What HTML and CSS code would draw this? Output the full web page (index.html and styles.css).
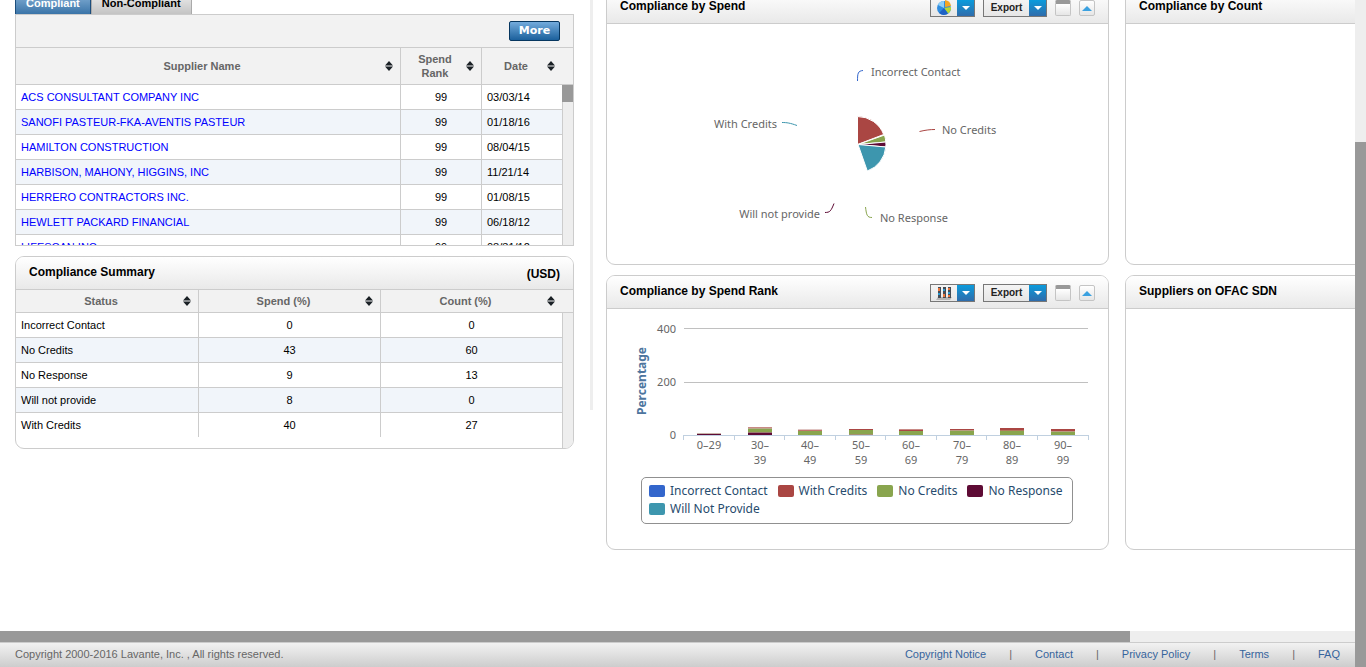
FILE: index.html
```html
<!DOCTYPE html>
<html lang="en">
<head>
<meta charset="utf-8">
<title>Compliance Dashboard</title>
<link rel="stylesheet" href="styles.css">
</head>
<body>
<svg width="0" height="0" class="defs" aria-hidden="true">
  <symbol id="sort" viewBox="0 0 8 10"><path d="M4 0 8 4.500H0ZM0 5.500H8L4 10Z" fill="#1b2126"/></symbol>
  <symbol id="caret" viewBox="0 0 8 4"><path d="M0 0H8L4 4Z" fill="#fff"/></symbol>
  <symbol id="up" viewBox="0 0 10 5"><path d="M5 0 10 5H0Z" fill="#3ba1e0"/></symbol>
</svg>
<div class="app">
  <div class="frame">
    <main class="viewport">
      <div class="board">
        <div class="side">
          <div class="tabs">
            <button class="tab active">Compliant</button><button class="tab">Non-Compliant</button>
          </div>
          <section class="panel suppliers">
            <div class="toolbar"><button class="more">More</button></div>
            <div class="grid clip">
              <table>
                <colgroup><col><col class="c-rank"><col class="c-date"></colgroup>
                <thead class="tall"><tr>
                  <th><button class="sorter"><span>Supplier Name</span><svg class="sort"><use href="#sort"/></svg></button></th>
                  <th><button class="sorter"><span>Spend Rank</span><svg class="sort"><use href="#sort"/></svg></button></th>
                  <th><button class="sorter"><span>Date</span><svg class="sort"><use href="#sort"/></svg></button></th>
                </tr></thead>
                <tbody>
                  <tr><td><a href="#">ACS CONSULTANT COMPANY INC</a></td><td class="num">99</td><td>03/03/14</td></tr>
                  <tr><td><a href="#">SANOFI PASTEUR-FKA-AVENTIS PASTEUR</a></td><td class="num">99</td><td>01/18/16</td></tr>
                  <tr><td><a href="#">HAMILTON CONSTRUCTION</a></td><td class="num">99</td><td>08/04/15</td></tr>
                  <tr><td><a href="#">HARBISON, MAHONY, HIGGINS, INC</a></td><td class="num">99</td><td>11/21/14</td></tr>
                  <tr><td><a href="#">HERRERO CONTRACTORS INC.</a></td><td class="num">99</td><td>01/08/15</td></tr>
                  <tr><td><a href="#">HEWLETT PACKARD FINANCIAL</a></td><td class="num">99</td><td>06/18/12</td></tr>
                  <tr><td><a href="#">LIFESCAN INC</a></td><td class="num">99</td><td>08/31/12</td></tr>
                </tbody>
              </table>
              <div class="rail"><div class="rail-head tall"></div><div class="rail-track"><div class="rail-thumb"></div></div></div>
            </div>
          </section>
          <section class="panel rounded summary">
            <header class="card-head"><h2>Compliance Summary</h2><strong>(USD)</strong></header>
            <div class="grid">
              <table>
                <colgroup><col class="c-status"><col><col class="c-count"></colgroup>
                <thead><tr>
                  <th><button class="sorter"><span>Status</span><svg class="sort"><use href="#sort"/></svg></button></th>
                  <th><button class="sorter"><span>Spend (%)</span><svg class="sort"><use href="#sort"/></svg></button></th>
                  <th><button class="sorter"><span>Count (%)</span><svg class="sort"><use href="#sort"/></svg></button></th>
                </tr></thead>
                <tbody>
                  <tr><td>Incorrect Contact</td><td class="num">0</td><td class="num">0</td></tr>
                  <tr><td>No Credits</td><td class="num">43</td><td class="num">60</td></tr>
                  <tr><td>No Response</td><td class="num">9</td><td class="num">13</td></tr>
                  <tr><td>Will not provide</td><td class="num">8</td><td class="num">0</td></tr>
                  <tr><td>With Credits</td><td class="num">40</td><td class="num">27</td></tr>
                </tbody>
              </table>
              <div class="rail"><div class="rail-head"></div><div class="rail-track"></div></div>
            </div>
          </section>
        </div>
        <div class="splitter"></div>
        <div class="cards">
          <section class="panel rounded card">
            <header class="card-head"><h2>Compliance by Spend</h2>
              <div class="tools">
                <button class="drop" aria-label="Chart type"><span class="face"><svg width="16" height="16" viewBox="0 0 16 16"><circle cx="8" cy="8" r="7" fill="#2f8de0"/><path d="M2 5A7 7 0 0 1 8 1V8Z" fill="#8fd0f7"/><path d="M9 7V0A7 7 0 0 1 15 6Z" fill="#f5a623"/><path d="M8 8 15 7A7 7 0 0 1 12 13.500Z" fill="#b9d832"/><path d="M8 8 12 13.500A7 7 0 0 1 3 13Z" fill="#1f62c4"/></svg></span><span class="arrow"><svg width="8" height="4"><use href="#caret"/></svg></span></button>
                <button class="drop export"><span class="face">Export</span><span class="arrow"><svg width="8" height="4"><use href="#caret"/></svg></span></button>
                <button class="mini window" aria-label="Maximize"></button>
                <button class="mini" aria-label="Collapse"><svg width="10" height="5"><use href="#up"/></svg></button>
              </div>
            </header>
            <svg class="chart" viewBox="607 24 501 240" role="img" aria-label="Compliance by Spend pie chart">
              <g stroke="#fff" stroke-width="1">
                <path d="M857.500 144.500V116.500A28 28 0 0 1 883.700 134.500Z" fill="#aa4643"/>
                <path d="M858 144.500 884.500 135A28 28 0 0 1 885.800 142Z" fill="#89a54e"/>
                <path d="M858 144.500 885.800 142A28 28 0 0 1 885.800 147Z" fill="#5e0b35"/>
                <path d="M858 144.500 885.800 147A28 28 0 0 1 867.300 171Z" fill="#3d96ae"/>
              </g>
              <g fill="none" stroke-width="1">
                <path d="M863 70.500C858 71 857.500 73 857.500 81" stroke="#36c"/>
                <path d="M935 129.500C930 129.500 926 130 919.500 131.500" stroke="#aa4643"/>
                <path d="M872 217.500C867 217.500 866.500 215 865.500 207" stroke="#89a54e"/>
                <path d="M825 212.500C830 212.500 831 211 834 203.500" stroke="#5e0b35"/>
                <path d="M782 122.500C787 122.500 790 123 797 125.500" stroke="#3d96ae"/>
              </g>
              <g class="label">
                <text x="871" y="76">Incorrect Contact</text>
                <text x="942" y="134">No Credits</text>
                <text x="880" y="222">No Response</text>
                <text x="820" y="218" text-anchor="end">Will not provide</text>
                <text x="777" y="128" text-anchor="end">With Credits</text>
              </g>
            </svg>
          </section>
          <section class="panel rounded card"><header class="card-head"><h2>Compliance by Count</h2></header></section>
          <section class="panel rounded card">
            <header class="card-head"><h2>Compliance by Spend Rank</h2>
              <div class="tools">
                <button class="drop" aria-label="Chart type"><span class="face"><svg width="16" height="14" viewBox="0 0 16 14"><path d="M2 11H16L14 14H0Z" fill="#b4b4b4"/><path d="M2 1H5V12H2ZM7 1H10V12H7ZM12 1H15V12H12Z" fill="#444b55"/><path d="M2 2H4V5H2ZM7 8H9V11H7ZM12 2H14V4H12ZM12 9H14V11H12Z" fill="#e8743b"/><path d="M2 7H4V9H2ZM7 3H9V5H7ZM12 6H14V8H12Z" fill="#2b9ad0"/></svg></span><span class="arrow"><svg width="8" height="4"><use href="#caret"/></svg></span></button>
                <button class="drop export"><span class="face">Export</span><span class="arrow"><svg width="8" height="4"><use href="#caret"/></svg></span></button>
                <button class="mini window" aria-label="Maximize"></button>
                <button class="mini" aria-label="Collapse"><svg width="10" height="5"><use href="#up"/></svg></button>
              </div>
            </header>
            <svg class="chart" viewBox="607 309 501 168" role="img" aria-label="Compliance by Spend Rank bar chart">
              <path d="M684 328.500H1088M684 382.500H1088" stroke="#c0c0c0"/>
              <g shape-rendering="crispEdges">
                <path d="M697 433h24v1h-24z" fill="#c9b3a8"/><path d="M697 434h24v1h-24z" fill="#5e0b35"/>
                <path d="M748 427h24v1h-24z" fill="#c98a86"/><path d="M748 428h24v1h-24z" fill="#b9a98a"/><path d="M748 429h24v3h-24z" fill="#89a54e"/><path d="M748 432h24v1h-24z" fill="#9a7a70"/><path d="M748 433h24v2h-24z" fill="#5e0b35"/>
                <path d="M798 429h24v1h-24z" fill="#e0c4c2"/><path d="M798 430h24v1h-24z" fill="#c0736b"/><path d="M798 431h24v4h-24z" fill="#89a54e"/>
                <path d="M849 429h24v1h-24z" fill="#aa4643"/><path d="M849 430h24v4h-24z" fill="#89a54e"/><path d="M849 434h24v1h-24z" fill="#a58f70"/>
                <path d="M899 429h24v1h-24z" fill="#c98a86"/><path d="M899 430h24v1h-24z" fill="#aa4643"/><path d="M899 431h24v4h-24z" fill="#89a54e"/>
                <path d="M950 429h24v1h-24z" fill="#aa4643"/><path d="M950 430h24v1h-24z" fill="#b99c80"/><path d="M950 431h24v4h-24z" fill="#89a54e"/>
                <path d="M1000 428h24v2h-24z" fill="#aa4643"/><path d="M1000 430h24v1h-24z" fill="#b07a5c"/><path d="M1000 431h24v4h-24z" fill="#89a54e"/>
                <path d="M1051 429h24v2h-24z" fill="#aa4643"/><path d="M1051 431h24v1h-24z" fill="#b99c80"/><path d="M1051 432h24v3h-24z" fill="#89a54e"/>
              </g>
              <path d="M683 435.500H1089M683.500 435V440M734.500 435V440M784.500 435V440M835.500 435V440M885.500 435V440M936.500 435V440M986.500 435V440M1037.500 435V440M1088.500 435V440" fill="none" stroke="#c0d0e0"/>
              <g class="label" text-anchor="end"><text x="676" y="333">400</text><text x="676" y="386">200</text><text x="676" y="439">0</text></g>
              <g class="label" text-anchor="middle">
                <text x="709" y="449">0–29</text>
                <text x="760" y="449">30–<tspan x="760" y="464">39</tspan></text>
                <text x="810" y="449">40–<tspan x="810" y="464">49</tspan></text>
                <text x="861" y="449">50–<tspan x="861" y="464">59</tspan></text>
                <text x="911" y="449">60–<tspan x="911" y="464">69</tspan></text>
                <text x="962" y="449">70–<tspan x="962" y="464">79</tspan></text>
                <text x="1012" y="449">80–<tspan x="1012" y="464">89</tspan></text>
                <text x="1063" y="449">90–<tspan x="1063" y="464">99</tspan></text>
              </g>
              <text class="axis-title" transform="translate(646 381) rotate(-90)" text-anchor="middle">Percentage</text>
            </svg>
            <ul class="legend">
              <li><i class="blue"></i>Incorrect Contact</li>
              <li><i class="red"></i>With Credits</li>
              <li><i class="green"></i>No Credits</li>
              <li><i class="plum"></i>No Response</li>
              <li><i class="teal"></i>Will Not Provide</li>
            </ul>
          </section>
          <section class="panel rounded card"><header class="card-head"><h2>Suppliers on OFAC SDN</h2></header></section>
        </div>
      </div>
    </main>
    <div class="h-track"><div class="h-thumb"></div></div>
    <footer class="footer">
      <span>Copyright 2000-2016 Lavante, Inc. , All rights reserved.</span>
      <nav><a href="#">Copyright Notice</a><span>|</span><a href="#">Contact</a><span>|</span><a href="#">Privacy Policy</a><span>|</span><a href="#">Terms</a><span>|</span><a href="#">FAQ</a></nav>
    </footer>
  </div>
  <div class="v-track"><div class="v-thumb"></div></div>
</div>
</body>
</html>
```
FILE: styles.css
```css
* { box-sizing: border-box; }
body { margin: 0; background: #fff; color: #000; font: 11px/14px "Liberation Sans", Arial, sans-serif; }
button { font: inherit; color: inherit; padding: 0; margin: 0; border: 0; background: none; }
a { text-decoration: none; }
h2 { margin: 0; font-size: 12px; line-height: 14px; }
.defs { position: absolute; }

.app { display: grid; grid-template-columns: minmax(0, 1fr) 11px; height: 100vh; overflow: hidden; }
.frame { display: flex; flex-direction: column; min-width: 0; min-height: 0; }
.viewport { flex: 1; min-height: 0; overflow: hidden; }

/* The board is wider than the window and scrolled down a little */
.board { width: 120%; margin-top: -10px; padding-left: 15px; display: grid; grid-template-columns: 559fr 32px 1020fr; align-items: start; }
.splitter { width: 3px; height: 420px; margin-left: 16px; background: #eee; }
.cards { display: grid; grid-template-columns: 503fr 501fr; gap: 10px 16px; }

.panel { border: 1px solid #ccc; background: #fff; overflow: hidden; }
.rounded { border-radius: 9px; }
.card { min-height: 275px; }
.card-head { display: flex; justify-content: space-between; align-items: center; height: 33px; padding: 0 13px; border-bottom: 1px solid #ccc; background: linear-gradient(#fff, #e9e9e9); }
.card-head h2 { padding-bottom: 3px; }
.card-head strong { padding-top: 1px; font-size: 12px; }

.tabs { display: flex; height: 24px; }
.tab { padding: 0 10px; border: 1px solid #aaa; border-width: 1px 1px 0; background: linear-gradient(#f2f2f2, #c4c4c4); font-weight: bold; }
.tab.active { border-color: #1d4e7c; background: linear-gradient(#8fb8dc, #3a74a8); color: #fff; }

.toolbar { display: flex; justify-content: flex-end; align-items: center; height: 33px; padding-right: 13px; background: #f2f2f2; border-bottom: 1px solid #ccc; }
.more { width: 51px; height: 20px; border: 1px solid #06365f; border-radius: 2px; background: linear-gradient(#73abdc, #1b609c); color: #fff; font: bold 11px/16px "DejaVu Sans", Verdana, sans-serif; }

.grid { display: grid; grid-template-columns: minmax(0, 1fr) 11px; }
.clip { height: 197px; overflow: hidden; }
table { width: 100%; align-self: start; table-layout: fixed; border-collapse: separate; border-spacing: 0; }
.c-rank { width: 81px; }
.c-date { width: 80px; }
.c-status { width: 183px; }
.c-count { width: 181px; }
th { height: 23px; padding: 0 7px 0 3px; background: #f2f2f2; border-right: 1px solid #ccc; border-bottom: 1px solid #ccc; }
.tall th { height: 37px; }
th:last-child, td:last-child { border-right: 0; }
.sorter { display: flex; align-items: center; width: 100%; color: #666; font-weight: bold; }
.sorter span { flex: 1; }
.sort { width: 8px; height: 10px; flex: none; }
td { height: 25px; padding: 0 5px; border-right: 1px solid #ccc; border-bottom: 1px solid #ccc; white-space: nowrap; }
td a { color: #00f; }
.num { text-align: center; }
tbody tr:nth-child(even) { background: #f1f5fa; }
.summary { margin-top: 10px; }
.summary table { margin-bottom: 11px; }
.summary tbody tr:last-child td { height: 24px; border-bottom: 0; }
.rail { display: flex; flex-direction: column; }
.rail-head { height: 23px; background: #f2f2f2; border-bottom: 1px solid #ccc; }
.rail-head.tall { height: 37px; }
.rail-track { flex: 1; border-left: 1px solid #ccc; background: #eee; }
.rail-thumb { height: 17px; margin-left: -1px; background: #999; }

.tools { display: flex; align-items: center; gap: 8px; padding-top: 2px; }
.drop { display: flex; width: 45px; height: 18px; border: 1px solid #777; background: linear-gradient(#f4f4f4, #e6e6e6); }
.export { width: 64px; }
.face { flex: 1; display: flex; align-items: center; justify-content: center; height: 16px; font-size: 10px; font-weight: bold; color: #222; }
.arrow { display: flex; align-items: center; justify-content: center; width: 17px; height: 16px; background: linear-gradient(#0b9bdc, #2f6cab); }
.mini { display: flex; align-items: center; justify-content: center; width: 16px; height: 16px; border: 1px solid #c4c4c4; border-radius: 2px; background: linear-gradient(#fff, #e6e6e6); }
.window { border-top: 4px solid #999; }

.chart { display: block; width: 100%; }
.label { font: 11px "Noto Sans", sans-serif; fill: #666; }
.axis-title { font: bold 12px "Noto Sans", sans-serif; fill: #4d759e; }
.legend { list-style: none; display: flex; flex-wrap: wrap; column-gap: 10px; margin: 0 35px 0 34px; padding: 4px 5px 5px 7px; border: 1px solid #909090; border-radius: 5px; font: 12px/18px "Noto Sans", sans-serif; color: #274b6d; }
.legend li { display: flex; align-items: center; gap: 5px; white-space: nowrap; }
.legend i { width: 16px; height: 12px; border-radius: 2px; }
.blue { background: #36c; }
.red { background: #aa4643; }
.green { background: #89a54e; }
.plum { background: #5e0b35; }
.teal { background: #3d96ae; }

.h-track { height: 11px; background: #eee; }
.h-thumb { width: 83.4%; height: 100%; background: #999; }
.v-track { display: flex; flex-direction: column; justify-content: flex-end; background: #eee; }
.v-thumb { height: 78.7%; background: #999; }
.footer { display: flex; justify-content: space-between; align-items: center; height: 25px; padding: 0 15px 2px; border-top: 1px solid #ccc; background: linear-gradient(#f2f2f2, #cdcdcd); color: #666; }
.footer nav { display: flex; gap: 23px; }
.footer a { color: #36649c; }
```
